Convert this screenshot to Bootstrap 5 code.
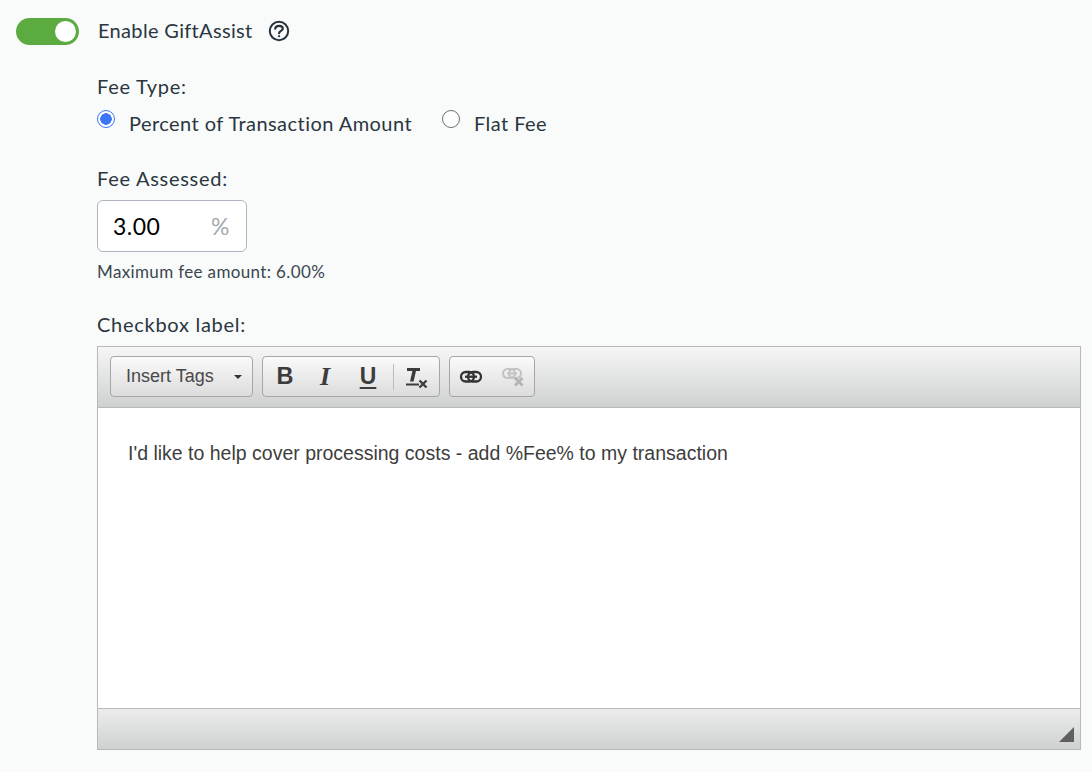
<!DOCTYPE html>
<html lang="en"><head><meta charset="utf-8"><title>GiftAssist</title>
<link rel="stylesheet" href="https://cdn.jsdelivr.net/npm/bootstrap@5.3.0/dist/css/bootstrap.min.css">
<style>
html,body{height:772px;overflow:hidden}
body{background:#f9fbfa;color:#2a3640;font-family:Lato,"Liberation Sans",sans-serif;font-size:20px;line-height:24px;letter-spacing:.45px}
.page-wrap{padding:17px 11px 0 16px}
.toggle-track{width:63px;height:27px;border-radius:14px;background:#5cab41;position:relative;flex:none;align-self:flex-end}
.toggle-knob{position:absolute;right:3px;top:3px;width:21px;height:21px;border-radius:50%;background:#fff}
.toggle-row{height:28px;gap:18px}
.toggle-text{margin:0 0 2px 1px;height:24px;letter-spacing:.33px}
.help-ic{width:22px;height:22px;margin-left:-3px}
.indent{padding-left:81px}
.sec-label{margin:0;height:24px;letter-spacing:.72px}
.sec-tall{height:25px}
.type-block{margin-top:29px}
.radio-row{gap:30px;margin-top:12px;height:28px}
.radio-item{display:flex;align-items:flex-start;gap:14px;margin:0}
.radio-item .form-check-input{width:18px;height:18px;margin:0;flex:none;border-color:#6a6f74;background-color:#fff}
.radio-item .form-check-input:checked{background-color:#fff;border-color:#3b76f6;background-image:radial-gradient(circle,#3b76f6 5.5px,#fff 6px)}
.radio-item span{margin-top:1px}
.assess-block{margin-top:28px}
.fee-box{width:150px;height:52px;margin-top:9px;border:1px solid #aeb5be;border-radius:6px;background:#fff;padding:0 16px 0 15px;align-items:center;justify-content:space-between;font-size:23px}
.fee-val{color:#000}
.fee-unit{color:#a3a9ae}
.fee-hint{font-size:17px;margin-top:8px;color:#3a4650;letter-spacing:.36px}
.check-block{margin-top:28px}
.rte{margin-top:9px;border:1px solid #b8b8b8;background:#fff;width:984px;font-family:"Liberation Sans",Arial,sans-serif;letter-spacing:0}
.rte-top{height:61px;background:linear-gradient(#f6f6f6,#cfd1d1);border-bottom:1px solid #b8b8b8;padding:9px 12px;gap:9px}
.rte-group{height:41px;border:1px solid #a6a6a6;border-radius:4px;background:linear-gradient(#fafafa,#dcdcdc);align-items:center}
.rte-select{width:143px;padding:0 10px 0 15px;justify-content:space-between;color:#484848;font-size:18px}
.rte-select span:first-child{margin-bottom:2px}
.rte-caret{width:0;height:0;border-left:4px solid transparent;border-right:4px solid transparent;border-top:4px solid #333}
.rte-fmt{width:178px}
.rte-links{width:86px}
.tool-ic{height:39px;display:flex;align-items:center;justify-content:center;color:#3c3c3c;font-size:23.5px;font-weight:700;line-height:1}
.w-b{width:44px}.w-i{width:36px}.w-u{width:50px}.w-x{width:44px}.w-l{width:42px}
.tool-sep{width:1px;height:26px;background:#bcbcbc}
.tool-serif{font-family:"Liberation Serif",serif;font-style:italic;font-size:26px}
.tool-u{text-decoration:underline;text-underline-offset:3px;text-decoration-thickness:2px;font-size:23px}
.rte-body{height:300px;padding:33px 30px;font-size:19.5px;line-height:24px;color:#3d3d3d}
.rte-foot{height:41px;background:linear-gradient(#ececec,#cfd1d1);border-top:1px solid #b8b8b8;position:relative}
.rte-grip{position:absolute;right:6px;bottom:7px;width:15px;height:15px}
</style></head>
<body>
<main class="page-wrap">
  <div class="d-flex align-items-center toggle-row">
    <div class="toggle-track"><div class="toggle-knob"></div></div>
    <span class="toggle-text">Enable GiftAssist</span>
    <svg class="help-ic" viewBox="0 0 22 22" fill="none" stroke="#27323c" stroke-width="2"><circle cx="11" cy="11" r="9.2"/><path d="M7.2 8.6c.3-1.9 1.9-2.8 3.9-2.8 2.1 0 3.7 1 3.7 2.7 0 2.4-3.7 2.3-3.7 4.7" stroke-linecap="round" stroke-width="2.2"/><circle cx="11.1" cy="16.2" r=".7" fill="#27323c" stroke-width="1"/></svg>
  </div>
  <div class="indent">
    <div class="type-block">
      <p class="sec-label">Fee Type:</p>
      <div class="d-flex radio-row">
        <label class="radio-item"><input class="form-check-input" type="radio" name="feeType" checked><span>Percent of Transaction Amount</span></label>
        <label class="radio-item"><input class="form-check-input" type="radio" name="feeType"><span>Flat Fee</span></label>
      </div>
    </div>
    <div class="assess-block">
      <p class="sec-label sec-tall">Fee Assessed:</p>
      <div class="d-flex fee-box"><span class="fee-val">3.00</span><span class="fee-unit">%</span></div>
      <div class="fee-hint">Maximum fee amount: 6.00%</div>
    </div>
    <div class="check-block">
      <p class="sec-label sec-tall">Checkbox label:</p>
      <div class="rte">
        <div class="d-flex rte-top">
          <div class="d-flex rte-group rte-select"><span>Insert Tags</span><span class="rte-caret"></span></div>
          <div class="d-flex rte-group rte-fmt">
            <span class="tool-ic w-b">B</span>
            <span class="tool-ic tool-serif w-i">I</span>
            <span class="tool-ic tool-u w-u">U</span>
            <span class="tool-sep"></span>
            <span class="tool-ic w-x"><svg width="24" height="24" viewBox="0 0 24 24"><path d="M3 3h13v3h-4l-2.4 10.5H6L8.4 6H3z" fill="#3c3c3c"/><path d="M2 18.5h13v2H2z" fill="#3c3c3c"/><path d="M15.5 15.5l7 7M22.5 15.5l-7 7" stroke="#3c3c3c" stroke-width="2.4"/></svg></span>
          </div>
          <div class="d-flex rte-group rte-links">
            <span class="tool-ic w-l"><svg width="24" height="16" viewBox="0 0 24 16" fill="none" stroke="#333" stroke-width="2.3"><rect x="2" y="3" width="13" height="9.5" rx="4.7"/><rect x="9" y="3" width="13" height="9.5" rx="4.7"/><path d="M6 7.7h12"/></svg></span>
            <span class="tool-ic w-l"><svg width="24" height="20" viewBox="0 0 24 20" fill="none" stroke="#c4c4c4" stroke-width="2.2"><rect x="2" y="2" width="12" height="9" rx="4.5"/><rect x="8" y="2" width="12" height="9" rx="4.5"/><path d="M6 6.5h10"/><path d="M14 11l7.5 7.5M21.5 11L14 18.5" stroke="#b4b4b4" stroke-width="2.8"/></svg></span>
          </div>
        </div>
        <div class="rte-body">I'd like to help cover processing costs - add %Fee% to my transaction</div>
        <div class="rte-foot"><svg class="rte-grip" viewBox="0 0 16 16"><path d="M16 0v16H0z" fill="#5f5f5f"/></svg></div>
      </div>
    </div>
  </div>
</main>
</body></html>
